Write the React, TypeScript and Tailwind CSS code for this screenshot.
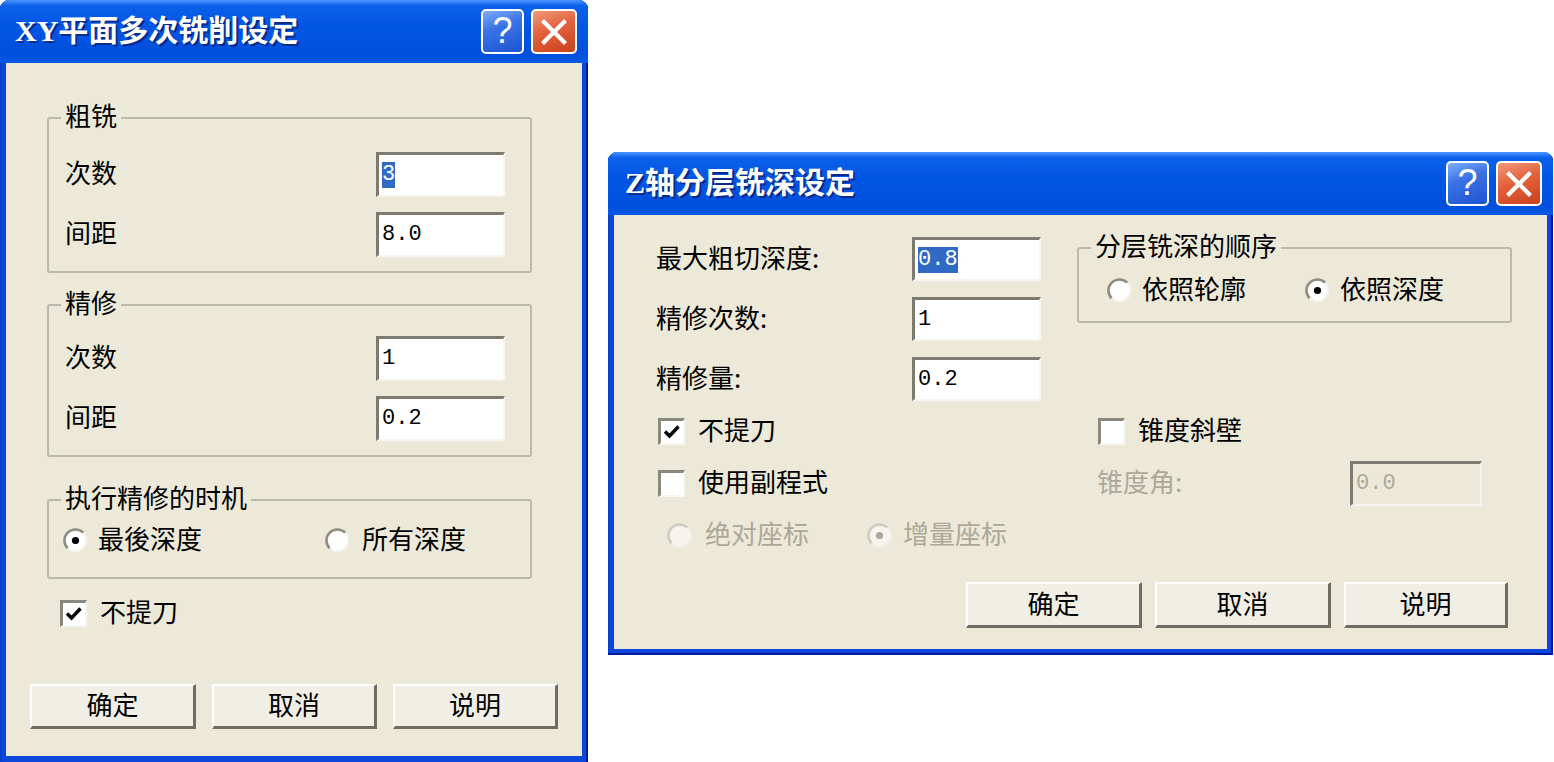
import type { ReactNode } from "react";

// Noto CJK sits a little low in its line box, so text gets a small bottom pad
const T = "pb-[6px]";

function HelpClose() {
  return (
    <div className="flex items-center gap-[7px]">
      <div className="flex h-[45px] w-[43px] items-center justify-center rounded-[5px] border-2 border-white bg-[linear-gradient(160deg,#7eaefc_0%,#3a72e6_40%,#1d55d2_100%)] pb-[2px] font-['Liberation_Sans',sans-serif] text-[36px] leading-none text-white">
        ?
      </div>
      <div className="flex h-[45px] w-[46px] items-center justify-center rounded-[5px] border-2 border-white bg-[linear-gradient(160deg,#f09a7c_0%,#e2613b_45%,#c9421c_100%)]">
        <svg width="28" height="28" viewBox="0 0 28 28">
          <path d="M4 4 L24 24 M24 4 L4 24" stroke="#fff" strokeWidth="4.2" strokeLinecap="square" />
        </svg>
      </div>
    </div>
  );
}

function TitleBar({ title, className }: { title: ReactNode; className: string }) {
  return (
    <div
      className={`flex shrink-0 items-center justify-between bg-[linear-gradient(180deg,#4a96ff_0%,#0c61ea_9%,#0256e4_40%,#004fdd_85%,#0a5ae6_100%)] pr-[11px] ${className}`}
    >
      <div className="pb-[3px] font-['Liberation_Serif','Noto_Sans_CJK_SC',serif] text-[30px] font-bold text-white [text-shadow:2px_2px_0_#0a2a8a]">
        {title}
      </div>
      <HelpClose />
    </div>
  );
}

function Group({
  label,
  className,
  legend = "ml-[-4px]",
  children,
}: {
  label: string;
  className: string;
  legend?: string;
  children: ReactNode;
}) {
  return (
    <fieldset className={`rounded-[3px] border-2 border-[#bbb9ab] ${className}`}>
      <legend className={`px-[4px] pb-[6px] text-[26px] leading-[24px] ${legend}`}>{label}</legend>
      {children}
    </fieldset>
  );
}

function Field({
  value,
  sel,
  dis,
  w = "w-[129px]",
  h = "h-[45px]",
}: {
  value: string;
  sel?: boolean;
  dis?: boolean;
  w?: string;
  h?: string;
}) {
  return (
    <div
      className={`flex shrink-0 items-center border-t-[3px] border-l-[3px] border-r-2 border-b-2 border-t-[#7d7b70] border-l-[#7d7b70] border-r-[#f6f5f0] border-b-[#f6f5f0] pl-[3px] font-['Liberation_Mono',monospace] text-[22px] leading-none ${w} ${h} ${dis ? "bg-[#ece9d8] text-[#aca899]" : "bg-white text-black"}`}
    >
      {sel ? <span className="bg-[#316ac5] py-[2px] text-white">{value}</span> : value}
    </div>
  );
}

function Radio({ checked, dis }: { checked?: boolean; dis?: boolean }) {
  return (
    <svg width="25" height="25" viewBox="0 0 25 25" className="shrink-0">
      <circle cx="12.5" cy="12.5" r="11" fill={dis ? "#f5f4ef" : "#fff"} />
      <path d="M4.7 20.3 A11 11 0 0 1 20.3 4.7" stroke={dis ? "#cfcdc2" : "#8f8d82"} strokeWidth="2.6" fill="none" />
      <path d="M20.3 4.7 A11 11 0 0 1 4.7 20.3" stroke="#f2f1ea" strokeWidth="2" fill="none" />
      {checked && <circle cx="12.5" cy="12.5" r="3.6" fill={dis ? "#aca899" : "#000"} />}
    </svg>
  );
}

function Check({ checked }: { checked?: boolean }) {
  return (
    <div className="flex h-[27px] w-[27px] shrink-0 items-center justify-center border-t-[3px] border-l-[3px] border-r-2 border-b-2 border-t-[#8a887c] border-l-[#8a887c] border-r-[#f7f6f1] border-b-[#f7f6f1] bg-white">
      {checked && (
        <svg width="20" height="20" viewBox="0 0 20 20">
          <path d="M3 9.5 L7.5 14 L16.5 4.5" stroke="#000" strokeWidth="3.4" fill="none" />
        </svg>
      )}
    </div>
  );
}

function Btn({ children, w }: { children: ReactNode; w: string }) {
  return (
    <div
      className={`flex shrink-0 items-center justify-center border-t-2 border-l-2 border-r-[3px] border-b-[3px] border-t-white border-l-white border-r-[#6f6d62] border-b-[#6f6d62] bg-[#f1efe5] pb-[5px] text-[26px] ${w}`}
    >
      {children}
    </div>
  );
}

function Row({ label, children }: { label: string; children: ReactNode }) {
  return (
    <div className="flex h-[45px] items-center justify-between">
      <span className={`text-[26px] ${T}`}>{label}</span>
      {children}
    </div>
  );
}

function XYDialog() {
  return (
    <div className="flex h-[762px] w-[588px] shrink-0 flex-col overflow-hidden rounded-t-[9px] bg-[#0b47da] shadow-[inset_-2px_0_0_#00199a,inset_2px_0_0_#0a3fcc]">
      <TitleBar
        className="h-[63px] pl-[15px]"
        title={
          <>
            <span className="font-['Liberation_Serif',serif]">XY</span>平面多次铣削设定
          </>
        }
      />
      <div className="mx-[6px] mb-[6px] flex flex-1 flex-col bg-[#ece9d8]">
        <Group label="粗铣" className="ml-[41px] mt-[40px] w-[485px] pl-[16px] pr-[25px] pt-[19px] pb-[14px]">
          <div className="flex flex-col gap-[15px]">
            <Row label="次数">
              <Field value="3" sel />
            </Row>
            <Row label="间距">
              <Field value="8.0" />
            </Row>
          </div>
        </Group>

        <Group label="精修" className="ml-[41px] mt-[17px] w-[485px] pl-[16px] pr-[25px] pt-[16px] pb-[14px]">
          <div className="flex flex-col gap-[15px]">
            <Row label="次数">
              <Field value="1" />
            </Row>
            <Row label="间距">
              <Field value="0.2" />
            </Row>
          </div>
        </Group>

        <Group label="执行精修的时机" className="ml-[41px] mt-[28px] w-[485px] pl-[16px] pt-[10px] pb-[22px]">
          <div className="ml-[-2px] flex h-[30px] items-center text-[26px]">
            <div className="flex w-[262px] items-center gap-[10px]">
              <Radio checked />
              <span className={T}>最後深度</span>
            </div>
            <div className="flex items-center gap-[12px]">
              <Radio />
              <span className={T}>所有深度</span>
            </div>
          </div>
        </Group>

        <div className="ml-[54px] mt-[21px] flex h-[27px] items-center gap-[13px] text-[26px]">
          <Check checked />
          <span className={T}>不提刀</span>
        </div>

        <div className="ml-[24px] mt-[57px] flex gap-[16px]">
          <Btn w="w-[166px] h-[45px]">确定</Btn>
          <Btn w="w-[165px] h-[45px]">取消</Btn>
          <Btn w="w-[165px] h-[45px]">说明</Btn>
        </div>
      </div>
    </div>
  );
}

function ZDialog() {
  return (
    <div className="mt-[152px] flex h-[503px] w-[945px] shrink-0 flex-col overflow-hidden rounded-t-[9px] bg-[#0b47da] shadow-[inset_-2px_-2px_0_#00199a,inset_2px_0_0_#0a3fcc]">
      <TitleBar
        className="h-[63px] pl-[17px]"
        title={
          <>
            <span className="font-['Liberation_Serif',serif]">Z</span>轴分层铣深设定
          </>
        }
      />
      <div className="mx-[6px] mb-[6px] flex flex-1 flex-col bg-[#ece9d8] pl-[42px] text-[26px]">
        <div className="flex">
          <div className="flex w-[421px] flex-col gap-[16px] pt-[22px]">
            {[
              ["最大粗切深度:", "0.8", true],
              ["精修次数:", "1", false],
              ["精修量:", "0.2", false],
            ].map(([l, v, s]) => (
              <div key={l as string} className="flex h-[44px] items-center">
                <span className={`w-[256px] ${T}`}>{l}</span>
                <Field value={v as string} sel={s as boolean} h="h-[44px]" />
              </div>
            ))}
          </div>
          <Group
            label="分层铣深的顺序"
            legend="ml-[-16px]"
            className="mt-[18px] h-fit w-[435px] pl-[28px] pt-[12px] pb-[16px]"
          >
            <div className="flex h-[30px] items-center">
              <div className="flex w-[198px] items-center gap-[10px]">
                <Radio />
                <span className={T}>依照轮廓</span>
              </div>
              <div className="flex items-center gap-[10px]">
                <Radio checked />
                <span className={T}>依照深度</span>
              </div>
            </div>
          </Group>
        </div>

        <div className="mt-[16px] flex h-[28px] items-center">
          <div className="ml-[2px] flex w-[419px] items-center gap-[13px]">
            <Check checked />
            <span className={T}>不提刀</span>
          </div>
          <div className="ml-[21px] flex items-center gap-[13px]">
            <Check />
            <span className={T}>锥度斜壁</span>
          </div>
        </div>

        <div className="mt-[16px] flex h-[45px] items-center">
          <div className="ml-[2px] flex w-[419px] items-center gap-[13px]">
            <Check />
            <span className={T}>使用副程式</span>
          </div>
          <span className={`w-[273px] pl-[20px] text-[#aca899] ${T}`}>锥度角:</span>
          <Field value="0.0" dis w="w-[132px]" />
        </div>

        <div className="ml-[11px] mt-[17px] flex h-[25px] items-center text-[#aca899]">
          <div className="flex w-[200px] items-center gap-[13px]">
            <Radio dis />
            <span className={T}>绝对座标</span>
          </div>
          <div className="flex items-center gap-[11px]">
            <Radio checked dis />
            <span className={T}>增量座标</span>
          </div>
        </div>

        <div className="mt-[34px] flex justify-end gap-[13px] pr-[39px]">
          <Btn w="w-[176px] h-[46px]">确定</Btn>
          <Btn w="w-[176px] h-[46px]">取消</Btn>
          <Btn w="w-[164px] h-[46px]">说明</Btn>
        </div>
      </div>
    </div>
  );
}

export default function App() {
  return (
    <div className="flex h-[762px] w-[1554px] gap-[20px] overflow-hidden bg-white font-['Noto_Sans_CJK_SC',sans-serif] text-black">
      <XYDialog />
      <ZDialog />
    </div>
  );
}
